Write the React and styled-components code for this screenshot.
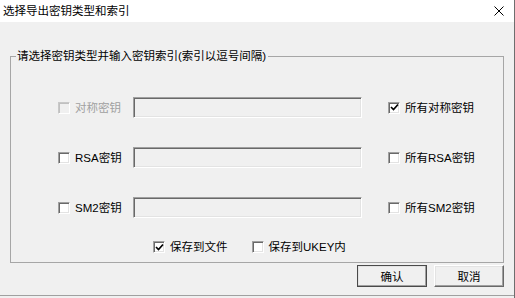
import React from "react";
import styled, { createGlobalStyle } from "styled-components";

const GlobalStyle = createGlobalStyle`
  html, body {
    margin: 0;
    padding: 0;
    background: #ffffff;
  }
  body {
    font-family: "Liberation Sans", "Noto Sans CJK SC", sans-serif;
    font-size: 11.5px;
    color: #000;
  }
`;

const keyRows = [
  { id: "sym", label: "对称密钥", all: "所有对称密钥", disabled: true, allChecked: true },
  { id: "rsa", label: "RSA密钥", all: "所有RSA密钥" },
  { id: "sm2", label: "SM2密钥", all: "所有SM2密钥" },
];

function CheckBox({ checked, disabled, children }) {
  return (
    <CheckLabel $disabled={disabled}>
      <Box $disabled={disabled}>
        {checked && (
          <svg width="9" height="9" viewBox="0 0 9 9">
            <path d="M1 4 L3.5 6.5 L8 1.5" stroke="#000" strokeWidth="1.7" fill="none" />
          </svg>
        )}
      </Box>
      <span>{children}</span>
    </CheckLabel>
  );
}

function App() {
  return (
    <>
      <GlobalStyle />
      <Window>
        <TitleBar>
          <Title>选择导出密钥类型和索引</Title>
          <CloseButton>
            <svg width="10" height="10" viewBox="0 0 10 10">
              <path d="M0.5 0.5 L9.5 9.5 M9.5 0.5 L0.5 9.5" stroke="#000" strokeWidth="1" />
            </svg>
          </CloseButton>
        </TitleBar>
        <Body>
          <Group>
            <Legend>请选择密钥类型并输入密钥索引(索引以逗号间隔)</Legend>
            <Rows>
              {keyRows.map((row) => (
                <Row key={row.id}>
                  <CheckBox disabled={row.disabled}>{row.label}</CheckBox>
                  <Field />
                  <AllCell>
                    <CheckBox checked={row.allChecked}>{row.all}</CheckBox>
                  </AllCell>
                </Row>
              ))}
            </Rows>
            <SaveRow>
              <CheckBox checked>保存到文件</CheckBox>
              <CheckBox>保存到UKEY内</CheckBox>
            </SaveRow>
          </Group>
          <Buttons>
            <Button $default>确认</Button>
            <Button>取消</Button>
          </Buttons>
        </Body>
      </Window>
    </>
  );
}

export default App;

const Window = styled.div`
  width: 515px;
  height: 298px;
  box-sizing: border-box;
  display: flex;
  flex-direction: column;
  border-right: 1px solid #6e6e6e;
  background: #f0f0f0;
  overflow: hidden;
`;

const TitleBar = styled.div`
  height: 22px;
  flex: none;
  background: #ffffff;
  display: flex;
  align-items: center;
  justify-content: space-between;
  padding: 0 10px 0 3px;
`;

const Title = styled.div`
  font-size: 11.5px;
  line-height: 14px;
`;

const CloseButton = styled.div`
  display: flex;
  align-items: center;
  margin-top: -1px;
`;

const Body = styled.div`
  flex: 1;
  display: flex;
  flex-direction: column;
  padding: 0 10px 0 10px;
  border-bottom: 1px solid #a0a0a0;
  margin-bottom: 2px;
`;

const Group = styled.div`
  margin-top: 34px;
  height: 207px;
  box-sizing: border-box;
  border: 1px solid #a6a6a6;
  position: relative;
  padding: 40px 0 0 47px;
`;

const Legend = styled.div`
  position: absolute;
  top: -8px;
  left: 5px;
  padding: 0 2px 0 1px;
  background: #f0f0f0;
  line-height: 14px;
  font-size: 11.5px;
`;

const Rows = styled.div`
  display: flex;
  flex-direction: column;
  gap: 29px;
`;

const Row = styled.div`
  display: grid;
  grid-template-columns: 75px 229px auto;
  align-items: center;
  height: 21px;
`;

const AllCell = styled.div`
  padding-left: 26px;
`;

const Field = styled.div`
  height: 21px;
  box-sizing: border-box;
  background: #f0f0f0;
  border-top: 1px solid #a0a0a0;
  border-left: 1px solid #a0a0a0;
  border-right: 1px solid #ffffff;
  border-bottom: 1px solid #ffffff;
  box-shadow: inset 1px 1px 0 #696969, inset -1px -1px 0 #e3e3e3;
`;

const CheckLabel = styled.label`
  display: flex;
  align-items: center;
  gap: 5px;
  white-space: nowrap;
  color: ${(p) => (p.$disabled ? "#a0a0a0" : "#000")};
  line-height: 14px;
`;

const Box = styled.span`
  width: 12px;
  height: 12px;
  box-sizing: border-box;
  flex: none;
  display: flex;
  align-items: center;
  justify-content: center;
  background: ${(p) => (p.$disabled ? "#f0f0f0" : "#ffffff")};
  border-top: 1px solid ${(p) => (p.$disabled ? "#c8c8c8" : "#a0a0a0")};
  border-left: 1px solid ${(p) => (p.$disabled ? "#c8c8c8" : "#a0a0a0")};
  border-right: 1px solid #ffffff;
  border-bottom: 1px solid #ffffff;
  box-shadow: ${(p) =>
    p.$disabled
      ? "inset 1px 1px 0 #c0c0c0"
      : "inset 1px 1px 0 #696969, inset -1px -1px 0 #e3e3e3"};
`;

const SaveRow = styled.div`
  display: flex;
  gap: 24px;
  margin: 22px 0 0 95px;
`;

const Buttons = styled.div`
  display: flex;
  justify-content: flex-end;
  gap: 7px;
  margin-top: 2px;
`;

const Button = styled.div`
  width: 70px;
  height: 22px;
  box-sizing: border-box;
  display: flex;
  align-items: center;
  justify-content: center;
  background: #f0f0f0;
  border-top: 1px solid #ffffff;
  border-left: 1px solid #ffffff;
  border-right: 1px solid #696969;
  border-bottom: 1px solid #696969;
  box-shadow: inset -1px -1px 0 #a0a0a0, inset 1px 1px 0 #e3e3e3;
  outline: ${(p) => (p.$default ? "1px solid #4a4a4a" : "none")};
  outline-offset: -1px;
`;
